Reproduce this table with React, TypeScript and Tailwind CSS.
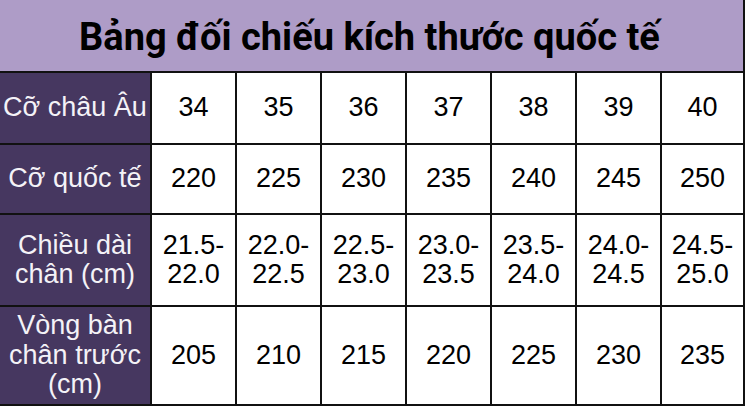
import React from "react";

const rows: { label: string[]; values: string[][] }[] = [
  { label: ["Cỡ châu Âu"], values: ["34", "35", "36", "37", "38", "39", "40"].map((v) => [v]) },
  { label: ["Cỡ quốc tế"], values: ["220", "225", "230", "235", "240", "245", "250"].map((v) => [v]) },
  {
    label: ["Chiều dài", "chân (cm)"],
    values: [
      ["21.5-", "22.0"],
      ["22.0-", "22.5"],
      ["22.5-", "23.0"],
      ["23.0-", "23.5"],
      ["23.5-", "24.0"],
      ["24.0-", "24.5"],
      ["24.5-", "25.0"],
    ],
  },
  {
    label: ["Vòng bàn", "chân trước", "(cm)"],
    values: ["205", "210", "215", "220", "225", "230", "235"].map((v) => [v]),
  },
];

export default function App() {
  return (
    <div className="w-[745px] h-[406px] overflow-hidden bg-white">
      <div
        className="grid grid-cols-[150px_repeat(6,83px)_81px] grid-rows-[71px_70px_68px_90px_97px] gap-[2px] bg-[#111111] pr-[2px] pb-[2px]"
        style={{ fontFamily: '"Liberation Sans", Arial, sans-serif' }}
      >
        <div className="col-span-8 flex items-center justify-center bg-[#ae9cc7] pr-[4px] pt-[2px]">
          <h1
            className="text-[38px] font-bold text-black leading-none"
            style={{ fontFamily: 'Roboto, "Noto Sans", sans-serif' }}
          >
            Bảng đối chiếu kích thước quốc tế
          </h1>
        </div>
        {rows.map((row, i) => (
          <React.Fragment key={i}>
            <div className="flex flex-col items-center justify-center bg-[#463760] text-[27px] leading-[29.5px] text-[#f4f2f7]">
              {row.label.map((l, j) => (
                <span key={j} className="whitespace-nowrap">
                  {l}
                </span>
              ))}
            </div>
            {row.values.map((v, k) => (
              <div
                key={k}
                className="flex flex-col items-center justify-center bg-white text-[27px] leading-[29.5px] text-black"
              >
                {v.map((t, j) => (
                  <span key={j}>{t}</span>
                ))}
              </div>
            ))}
          </React.Fragment>
        ))}
      </div>
    </div>
  );
}
